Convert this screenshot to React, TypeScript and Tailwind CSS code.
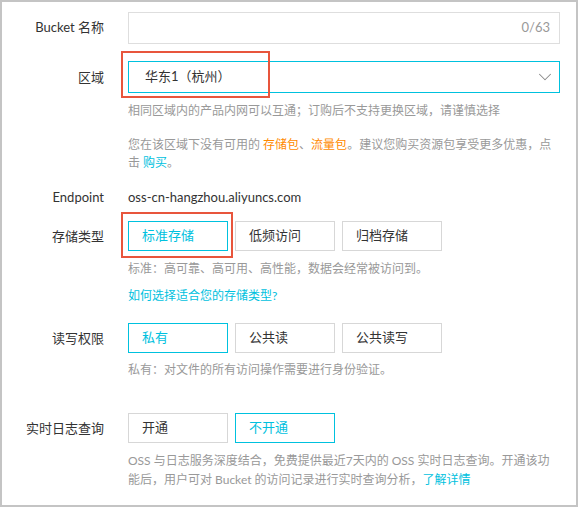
import { ChevronDown } from "lucide-react";

function Option({ label, active }: { label: string; active?: boolean }) {
    return (
        <div
            className={
                "w-[100px] h-[30px] flex items-center pl-[13px] text-[13px] border " +
                (active ? "border-[#00c1de] text-[#00c1de]" : "border-[#d7d7d7] text-[#333]")
            }
        >
            {label}
        </div>
    );
}

function Label({ children }: { children: React.ReactNode }) {
    return <div className="w-[102px] shrink-0 text-right text-[13px] text-[#333]">{children}</div>;
}

export default function App() {
    return (
        <div
            className="w-[578px] h-[507px] border-2 border-[#c4c4c4] bg-white overflow-hidden"
            style={{ fontFamily: 'Lato, "Noto Sans CJK SC", sans-serif' }}
        >
            {/* Bucket name */}
            <div className="flex items-center mt-[10px]">
                <Label>Bucket 名称</Label>
                <div className="ml-6 w-[432px] h-[32px] border border-[#dedede] flex items-center justify-end pr-[9px] text-[13px] text-[#999]">
                    0/63
                </div>
            </div>

            {/* Region */}
            <div className="flex mt-[17px]">
                <div className="w-[102px] shrink-0 text-right text-[13px] text-[#333] leading-[32px]">区域</div>
                <div className="ml-6 w-[432px]">
                    <div className="relative">
                        <div className="h-[32px] border border-[#00c1de] flex items-center justify-between pl-[16px] pr-[3px] text-[13px] text-[#333]">
                            <span>华东1（杭州）</span>
                            <ChevronDown className="w-[22px] h-[22px] text-[#888]" strokeWidth={1.1} />
                        </div>
                        <div className="absolute left-[-7px] top-[-10px] w-[149px] h-[47px] border-2 border-[#e8553c]"></div>
                    </div>
                    <p className="mt-[9px] text-[12px] leading-[18px] text-[#999]">
                        相同区域内的产品内网可以互通；订购后不支持更换区域，请谨慎选择
                    </p>
                    <p className="mt-[16px] text-[12px] leading-[18px] text-[#999]">
                        您在该区域下没有可用的 <span className="text-[#ff8a00]">存储包</span>、
                        <span className="text-[#ff8a00]">流量包</span>。建议您购买资源包享受更多优惠，点击{" "}
                        <span className="text-[#00c1de]">购买</span>。
                    </p>
                </div>
            </div>

            {/* Endpoint */}
            <div className="flex mt-[15px] leading-[20px]">
                <Label>Endpoint</Label>
                <div className="ml-6 text-[13px] text-[#333]">oss-cn-hangzhou.aliyuncs.com</div>
            </div>

            {/* Storage class */}
            <div className="flex mt-[14px]">
                <div className="w-[102px] shrink-0 text-right text-[13px] text-[#333] leading-[30px]">存储类型</div>
                <div className="ml-6">
                    <div className="flex gap-[7px] relative">
                        <Option label="标准存储" active />
                        <Option label="低频访问" />
                        <Option label="归档存储" />
                        <div className="absolute left-[-7px] top-[-9px] w-[112px] h-[46px] border-2 border-[#e8553c]"></div>
                    </div>
                    <p className="mt-[9px] text-[12px] leading-[18px] text-[#999]">
                        标准：高可靠、高可用、高性能，数据会经常被访问到。
                    </p>
                    <p className="mt-[9px] text-[12px] leading-[18px] text-[#00c1de]">如何选择适合您的存储类型?</p>
                </div>
            </div>

            {/* ACL */}
            <div className="flex mt-[18px]">
                <div className="w-[102px] shrink-0 text-right text-[13px] text-[#333] leading-[30px]">读写权限</div>
                <div className="ml-6">
                    <div className="flex gap-[7px]">
                        <Option label="私有" active />
                        <Option label="公共读" />
                        <Option label="公共读写" />
                    </div>
                    <p className="mt-[8px] text-[12px] leading-[18px] text-[#999]">
                        私有：对文件的所有访问操作需要进行身份验证。
                    </p>
                </div>
            </div>

            {/* Real-time log */}
            <div className="flex mt-[34px]">
                <div className="w-[102px] shrink-0 text-right text-[13px] text-[#333] leading-[30px]">实时日志查询</div>
                <div className="ml-6 w-[432px]">
                    <div className="flex gap-[7px]">
                        <Option label="开通" />
                        <Option label="不开通" active />
                    </div>
                    <p className="mt-[8px] text-[12px] leading-[19px] text-[#999] pr-[10px]">
                        OSS 与日志服务深度结合，免费提供最近7天内的 OSS 实时日志查询。开通该功能后，用户可对 Bucket
                        的访问记录进行实时查询分析，<span className="text-[#00c1de]">了解详情</span>
                    </p>
                </div>
            </div>
        </div>
    );
}
